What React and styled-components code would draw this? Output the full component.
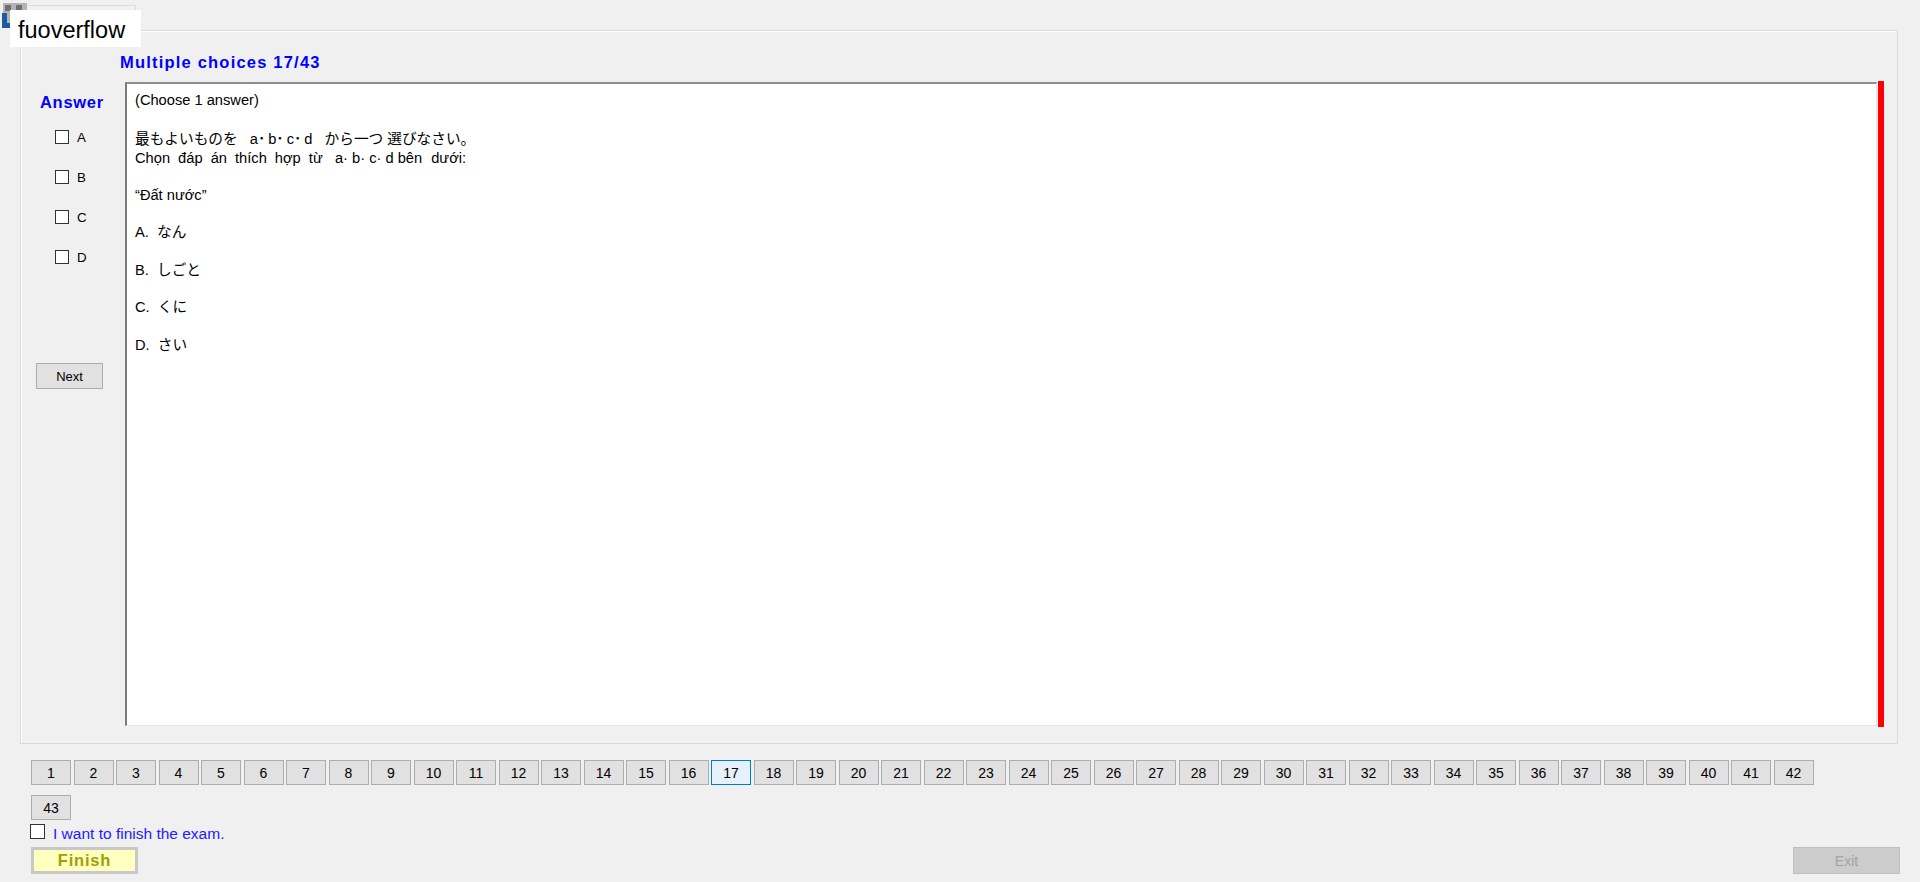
import React from 'react';
import styled, { createGlobalStyle } from 'styled-components';

const GlobalStyle = createGlobalStyle`
  html, body {
    margin: 0;
    padding: 0;
    background: #f0f0f0;
    overflow: hidden;
  }
  body {
    font-family: "Liberation Sans", Arial, "Noto Sans CJK JP", sans-serif;
    color: #000;
  }
`;

const Window = styled.div`
  position: relative;
  width: 1920px;
  height: 882px;
  box-sizing: border-box;
  padding-top: 30px;
  background: #f0f0f0;
`;

const BehindFrame = styled.div`
  position: absolute;
  left: 20px;
  top: 5px;
  width: 115px;
  height: 10px;
  border-top: 1px solid #dcdcdc;
  border-right: 1px solid #dcdcdc;
`;

const AppIcon = styled.svg`
  position: absolute;
  left: 1px;
  top: 2px;
`;

const NameTag = styled.div`
  position: absolute;
  left: 10px;
  top: 10px;
  width: 131px;
  height: 37px;
  box-sizing: border-box;
  padding: 4px 0 0 8px;
  background: #fff;
  font-size: 23.5px;
  line-height: 33px;
  color: #000;
`;

const Panel = styled.section`
  margin: 0 22px 0 20px;
  height: 714px;
  box-sizing: border-box;
  border: 1px solid #dadada;
  box-shadow: inset 1px 1px 0 #fff;
  padding-right: 13px;
  display: flex;
  flex-direction: column;
`;

const Heading = styled.div`
  margin: 22px 0 0 99px;
  font-size: 16.5px;
  line-height: 19px;
  font-weight: bold;
  letter-spacing: 1.2px;
  color: #0000ff;
`;

const Body = styled.div`
  display: flex;
  margin-top: 10px;
`;

const AnswerColumn = styled.div`
  width: 104px;
  flex-shrink: 0;
  padding-top: 11px;
  display: flex;
  flex-direction: column;
  align-items: flex-start;
`;

const AnswerTitle = styled(Heading)`
  margin: 0 0 0 19px;
  font-size: 16.5px;
  letter-spacing: 0.7px;
`;

const ChoiceList = styled.div`
  margin: 5px 0 0 34px;
  display: flex;
  flex-direction: column;
`;

const ChoiceRow = styled.label`
  height: 40px;
  display: flex;
  align-items: center;
  gap: 8px;
  font-size: 13.3px;
`;

const Box = styled.span`
  display: inline-block;
  width: ${(p) => p.size}px;
  height: ${(p) => p.size}px;
  box-sizing: border-box;
  border: 1px solid #333;
  background: #fff;
  flex-shrink: 0;
`;

const WinButton = styled.button`
  box-sizing: border-box;
  padding: 0;
  margin: 0;
  background: #e1e1e1;
  border: 1px solid #adadad;
  font-family: "Liberation Sans", Arial, sans-serif;
  color: #000;
  display: flex;
  align-items: center;
  justify-content: center;
`;

const NextButton = styled(WinButton)`
  margin: 86px 0 0 15px;
  width: 67px;
  height: 26px;
  font-size: 13px;
`;

const Sheet = styled.div`
  width: 1752px;
  height: 644px;
  box-sizing: border-box;
  background: #fff;
  border-top: 2px solid #8e8e8e;
  border-left: 2px solid #7a7a7a;
  border-right: 1px solid #e3e3e3;
  border-bottom: 1px solid #e3e3e3;
  padding: 7px 8px;
  font-size: 14.67px;
  line-height: 18px;
  white-space: pre;
`;

const Line = styled.div`
  margin-bottom: ${(p) => p.gap ?? 19.5}px;
`;

const JpLine = styled.div`
  line-height: 20px;
`;

const ViLine = styled.div`
  margin-bottom: 18.5px;
`;

const Spread = styled.span`
  word-spacing: ${(p) => p.spacing}px;
`;

const Marker = styled.div`
  width: 6px;
  height: 646px;
  margin: -1px 0 0 1px;
  background: #ff0000;
  flex-shrink: 0;
`;

const NavGrid = styled.div`
  margin: 16px 0 0 31px;
  display: grid;
  grid-template-columns: repeat(42, 40px);
  column-gap: 2.5px;
  row-gap: 10px;
`;

const NavButton = styled(WinButton)`
  height: 25px;
  font-size: 14px;
  background: ${(p) => (p.current ? '#e5f1fb' : '#e1e1e1')};
  border-color: ${(p) => (p.current ? '#0078d7' : '#adadad')};
`;

const ConfirmRow = styled.label`
  margin: 4px 0 0 30px;
  display: flex;
  align-items: baseline;
  gap: 8px;
  font-size: 15.5px;
  line-height: 18px;
  color: #2020ff;
`;

const BottomBar = styled.div`
  margin-top: 4px;
  padding: 0 20px 0 31px;
  display: flex;
  justify-content: space-between;
`;

const FinishButton = styled.button`
  width: 107px;
  height: 27px;
  box-sizing: border-box;
  padding: 0;
  border: 3px solid #c8c8c8;
  background: #ffffc0;
  font-family: "Liberation Sans", Arial, sans-serif;
  font-size: 16.5px;
  font-weight: bold;
  letter-spacing: 0.8px;
  color: #a0a000;
`;

const ExitButton = styled.button`
  width: 107px;
  height: 27px;
  box-sizing: border-box;
  padding: 0;
  border: 1px solid #bfbfbf;
  background: #cccccc;
  font-family: "Liberation Sans", Arial, sans-serif;
  font-size: 14px;
  color: #a3a3a3;
`;

const choices = ['A', 'B', 'C', 'D'];
const options = [
  ['A.', 'なん'],
  ['B.', 'しごと'],
  ['C.', 'くに'],
  ['D.', 'さい'],
];
const total = 43;
const current = 17;

export default function App() {
  return (
    <Window>
      <GlobalStyle />
      <BehindFrame />
      <AppIcon width="28" height="27" viewBox="0 0 28 27">
        <rect x="2" y="1" width="24" height="21" fill="#b4b4b4" />
        <rect x="4" y="3" width="6" height="6" fill="#6f6f6f" />
        <rect x="15" y="3" width="6" height="6" fill="#6f6f6f" />
        <rect x="1" y="11" width="5" height="15" fill="#1d5ba3" />
        <rect x="1" y="21" width="12" height="5" fill="#1d5ba3" />
      </AppIcon>
      <NameTag>fuoverflow</NameTag>

      <Panel>
        <Heading>Multiple choices {current}/{total}</Heading>
        <Body>
          <AnswerColumn>
            <AnswerTitle>Answer</AnswerTitle>
            <ChoiceList>
              {choices.map((c) => (
                <ChoiceRow key={c}>
                  <Box size={14} />
                  {c}
                </ChoiceRow>
              ))}
            </ChoiceList>
            <NextButton>Next</NextButton>
          </AnswerColumn>

          <Sheet>
            <Line gap={20}>(Choose 1 answer)</Line>
            <JpLine>{'最もよいものを   a･\u2009b･\u2009c･\u2009d   から一つ 選びなさい。'}</JpLine>
            <ViLine>
              <Spread spacing={4}>Chọn đáp án thích hợp từ</Spread>
              {'   a· b· c· d '}
              <Spread spacing={5}>bên dưới:</Spread>
            </ViLine>
            <Line>{'“Đất nước”'}</Line>
            {options.map(([k, v]) => (
              <Line key={k}>{`${k}  ${v}`}</Line>
            ))}
          </Sheet>
          <Marker />
        </Body>
      </Panel>

      <NavGrid>
        {Array.from({ length: total }, (_, i) => i + 1).map((n) => (
          <NavButton key={n} current={n === current}>
            {n}
          </NavButton>
        ))}
      </NavGrid>

      <ConfirmRow>
        <Box size={15} />
        I want to finish the exam.
      </ConfirmRow>

      <BottomBar>
        <FinishButton>Finish</FinishButton>
        <ExitButton>Exit</ExitButton>
      </BottomBar>
    </Window>
  );
}
